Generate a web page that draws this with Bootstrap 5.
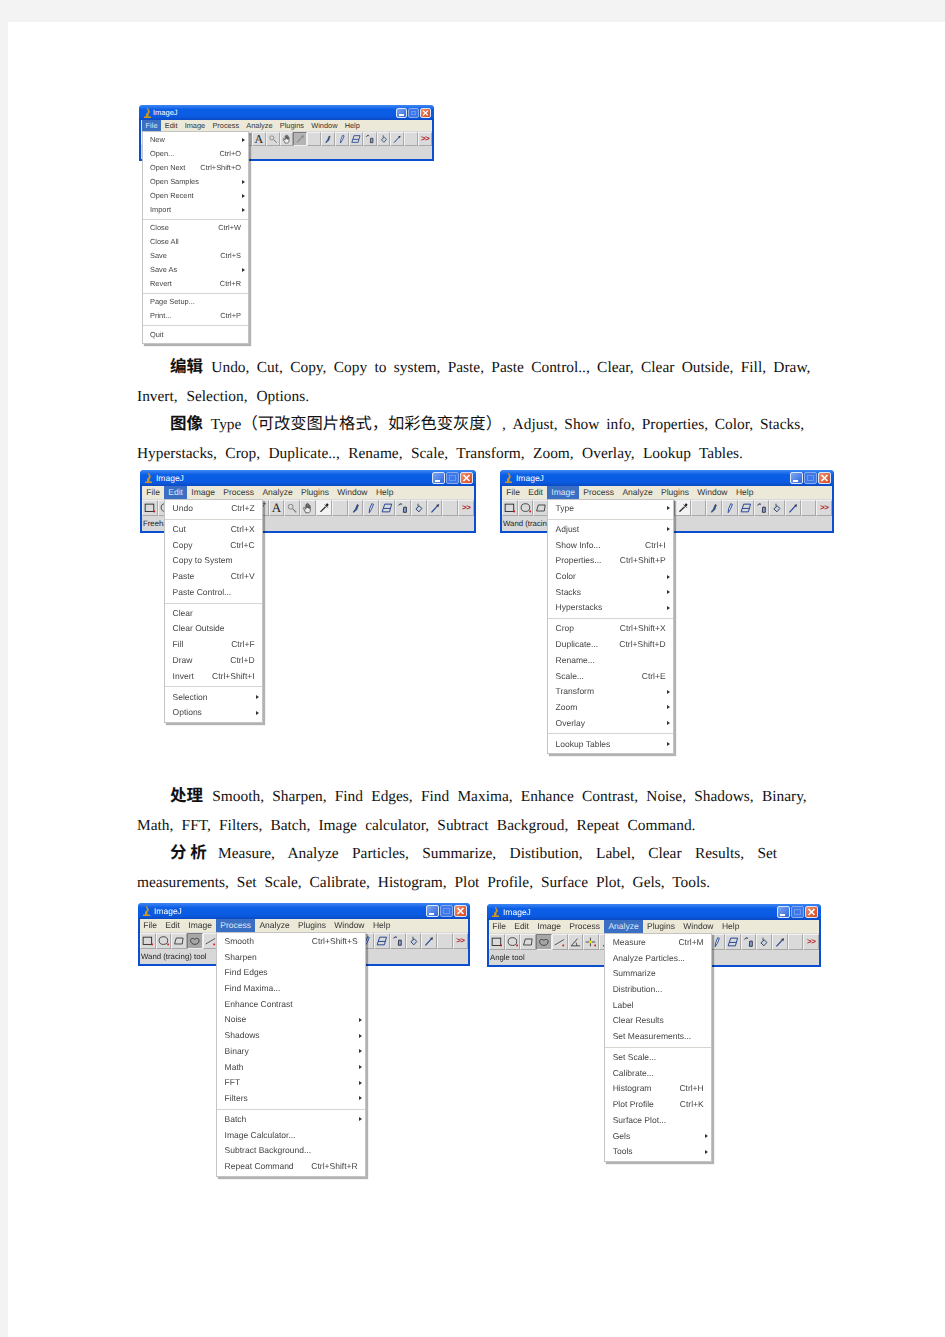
<!DOCTYPE html>
<html lang="zh">
<head>
  <meta charset="UTF-8" />
  <meta name="viewport" content="width=device-width, initial-scale=1.0"/>
  <title>ImageJ 菜单</title>
  <link href="https://cdn.jsdelivr.net/npm/bootstrap@5.3.0/dist/css/bootstrap.min.css" rel="stylesheet" />
  <style>
    body { background: #f3f3f3; margin: 0; }
    .sheet { background: #fff; margin: 22px 0 0 8px; padding: 83px 0 0 129px; height: 1315px; overflow: hidden; }

    /* document text */
    .doc { font: 15.4px/28.7px "Liberation Serif", "Noto Sans CJK SC", serif; color: #111; word-spacing: 4.6px; white-space: nowrap; text-rendering: geometricPrecision; }
    .doc p { margin: 0; height: 28.7px; }
    .doc .ind { padding-left: 33px; }
    .doc b { font-family: "Noto Sans CJK SC", sans-serif; font-size: 16.5px; line-height: 0; font-weight: 700; margin-right: 1px; }
    .doc .cjk { font-family: "Noto Sans CJK SC", sans-serif; font-size: 16.3px; line-height: 0; word-spacing: 0; }
    /* each line of the source document has its own spacing */
    .doc .ws-l1 { word-spacing: 3.5px; }
    .doc .ws-l2 { word-spacing: 5px; }
    .doc .ws-l3 { word-spacing: 3px; }
    .doc .ws-l5, .doc .ws-l6 { word-spacing: 4.4px; }
    .doc .ws-l7 { word-spacing: 9.5px; }
    .doc .ws-l7 b { word-spacing: 0; margin-right: -2px; }
    .doc .ws-l8 { word-spacing: 4.1px; }

    /* rows of screenshots */
    .row-file { height: 249px; }
    .row-edit { height: 313px; margin-top: 1.2px; }
    .row-proc { height: 280px; margin-top: 5.2px; }

    /* ImageJ window */
    .ij-win { position: relative; background: #d8d8d8; border: solid #0a4fd0; border-width: 0 2px 2px; border-radius: 4px 4px 0 0; font-family: "Liberation Sans", sans-serif; color: #333; filter: blur(.4px); text-rendering: geometricPrecision; }
    .win-file { width: 295px; margin-left: 2px; }
    .win-edit { width: 336px; margin-left: 3px; }
    .win-image { width: 334px; margin-left: 24px; }
    .win-proc { width: 332px; margin-left: 1px; }
    .win-ana { width: 334px; margin: 1px 0 0 17px; }

    .ij-title { height: 16px; margin: 0 -2px; padding: 0 3px 0 5px; border-radius: 4px 4px 0 0; background: linear-gradient(#3f86f2, #0a5ee6 30%, #0b5be2 75%, #0a49c4); color: #fff; font-size: 8.5px; }
    .win-file .ij-title { height: 15px; font-size: 7.5px; }
    .win-file .ij-title > svg { margin-right: 2px !important; }
    .ij-wbtn { width: 13px; height: 12px; margin-left: 1px; border: 1px solid #dbe6fb; border-radius: 2px; background: linear-gradient(135deg, #7ea8f3, #2f66dc); position: relative; }
    .win-file .ij-wbtn { width: 11px; height: 10px; }
    .ij-wbtn.is-min::after { content: ""; position: absolute; left: 2px; bottom: 1px; width: 5px; height: 2px; background: #fff; }
    .ij-wbtn.is-max { background: #3f78e8; border-color: #86abf0; }
    .ij-wbtn.is-max::after { content: ""; position: absolute; inset: 2px; border: 1px solid #6c97ea; }
    .ij-wbtn.is-close { background: linear-gradient(135deg, #ee9272, #d9461c); }
    .ij-wbtn svg { display: block; width: 100%; height: 100%; }

    .ij-bar { height: 13px; background: #ece9d8; font-size: 8.5px; line-height: 13px; }
    .win-file .ij-bar { height: 11px; font-size: 7.4px; line-height: 11px; }
    .ij-bar > span, .ij-bar > div { padding: 0 4.2px; }
    .win-file .ij-bar > span, .win-file .ij-bar > div { padding: 0 3.6px; }
    .win-file .ij-bar > :first-child { margin-left: 1px; }
    .win-proc .ij-bar > :first-child, .win-ana .ij-bar > :first-child { margin-left: -1px; }
    .ij-bar .is-open { background: #3a6fc4; color: #dfe8f7; }

    .ij-tools { height: 17px; padding-top: 1px; }
    .win-file .ij-tools { height: 15px; }
    .ij-tool { flex: 1 1 0; min-width: 0; display: flex; align-items: center; justify-content: center; background: #dadada; border: 1px solid; border-color: #f2f2f2 #a8a8a8 #a8a8a8 #f2f2f2; overflow: hidden; font-style: normal; }
    .ij-tool svg { width: 100%; height: 100%; display: block; }
    .ij-tool.is-on { background: #a6a6a6; border-color: #7d7d7d #eee #eee #7d7d7d; }
    .win-file .ij-tool.is-on { background: #b4b4b4; }
    .win-file .ij-tool.is-on svg { opacity: .3; }
    .ij-tool.is-white { background: #f2f2f2; }
    .ij-tool.is-more { color: #b3141a; font-size: 8px; font-weight: 700; letter-spacing: -.5px; }
    .ij-tool.is-letter { font: 13px/1 "Liberation Serif", serif; color: #222; }
    .win-file .ij-tool.is-letter { font-size: 12px; }

    .ij-status { height: 15px; padding-left: 1px; font-size: 7.8px; line-height: 15px; color: #222; white-space: nowrap; overflow: hidden; }
    .win-file .ij-status { height: 13px; }

    /* open menu */
    .ij-menu { --bs-dropdown-min-width: 0; --bs-dropdown-padding-y: 1px; --bs-dropdown-font-size: 8.5px; --bs-dropdown-border-radius: 0; --bs-dropdown-border-color: #c4c4c4; --bs-dropdown-item-padding-x: 7.5px; --bs-dropdown-item-padding-y: 0; --bs-dropdown-divider-margin-y: 2.15px; --bs-dropdown-divider-bg: #d6d6d0; --bs-dropdown-link-color: #444; --bs-dropdown-inner-border-radius: 0; top: 100%; left: 0; margin: 0; box-shadow: 2px 2px 1px rgba(0, 0, 0, .3); z-index: 5; }
    .ij-menu .dropdown-item { line-height: 15.7px; position: relative; }
    .ij-menu .dropdown-divider { opacity: 1; }
    .ij-sub::after { content: ""; position: absolute; right: 3px; top: 5.5px; border: solid transparent; border-width: 2.5px 0 2.5px 3px; border-left-color: #333; }
    .win-file .ij-menu { --bs-dropdown-font-size: 7.4px; --bs-dropdown-item-padding-x: 7px; --bs-dropdown-divider-margin-y: 1.6px; }
    .win-file .ij-menu .dropdown-item { line-height: 14px; }
    .win-file .ij-sub::after { top: 4.5px; }
    .mw-file { width: 107px; }
    .mw-edit { width: 99px; }
    .mw-image { width: 127px; }
    .mw-proc { width: 150px; }
    .mw-ana { width: 108px; }
  </style>
</head>
<body>
  <!-- toolbar icons -->
  <svg width="0" height="0" class="position-absolute">
    <symbol id="t-rect" viewBox="0 0 16 16"><rect x="2.5" y="3.5" width="10" height="8.5" fill="none" stroke="#222"/><rect x="12" y="11" width="2" height="2" fill="#d11"/></symbol>
    <symbol id="t-oval" viewBox="0 0 16 16"><ellipse cx="7.5" cy="7.5" rx="5" ry="4.5" fill="none" stroke="#333"/><rect x="12" y="11" width="2" height="2" fill="#d11"/></symbol>
    <symbol id="t-poly" viewBox="0 0 16 16"><path d="M5 4.500h8l-1 7H3z" fill="none" stroke="#333"/></symbol>
    <symbol id="t-free" viewBox="0 0 16 16"><path d="M3 7.500c0-3 3-3 5-1.500 2-1.500 5-1.500 5 1.500S10 12 8 12 3 10.500 3 7.500z" fill="none" stroke="#333"/></symbol>
    <symbol id="t-line" viewBox="0 0 16 16"><path d="M2 11.500 13 5" stroke="#444" fill="none"/><rect x="11" y="11" width="2" height="2" fill="#d11"/></symbol>
    <symbol id="t-angle" viewBox="0 0 16 16"><path d="M2.500 12.500h10.500M2.500 12.500 10 4M8 8.500c1 1 1 3 1 4" stroke="#333" fill="none"/></symbol>
    <symbol id="t-point" viewBox="0 0 16 16"><path d="M2 8h11M7.500 3v10" stroke="#333"/><rect x="6" y="6.500" width="3" height="3" fill="#ee0"/><rect x="12" y="11" width="2" height="2" fill="#d11"/></symbol>
    <symbol id="t-wand" viewBox="0 0 16 16"><path d="M4 13 11 5" stroke="#333" stroke-width="1.500"/><path d="M12 2v2M10 3h4" stroke="#666"/></symbol>
    <symbol id="t-mag" viewBox="0 0 16 16"><circle cx="6.500" cy="6.500" r="2.800" fill="none" stroke="#777"/><path d="m9 9 4 4" stroke="#777" stroke-width="1.300"/></symbol>
    <symbol id="t-hand" viewBox="0 0 16 16"><path d="M5.500 13.500 3 8.500c-.5-1 .8-1.500 1.400-.6L5.500 9.500V4.500c0-1 1.300-1 1.300 0V8 3.300c0-1 1.400-1 1.400 0V8 4.300c0-1 1.300-1 1.300 0V9 6c0-1 1.300-1 1.300 0v4.500c0 1.500-1 3-2 3z" fill="#eee" stroke="#333" stroke-width=".8"/></symbol>
    <symbol id="t-drop" viewBox="0 0 16 16"><path d="M4 12.500 10 6.500" stroke="#333" stroke-width="1.600"/><path d="m9 4 3.500 3.500M11 3.500c1-1 2.500.5 1.500 1.500l-1 1z" stroke="#111" fill="#111"/></symbol>
    <symbol id="t-brush" viewBox="0 0 16 16"><path d="M5 13c1-3 2-2.500 2.500-4l2-5 1.500.5-2 5.500c-.3 1-2 .5-2.500 2.500z" fill="#2b5fb0" stroke="#223" stroke-width=".6"/></symbol>
    <symbol id="t-pencil" viewBox="0 0 16 16"><path d="M6 13.500 6.500 9l2.500-6 2 .8-2.500 6z" fill="#dfe8f7" stroke="#1c3f90"/></symbol>
    <symbol id="t-erase" viewBox="0 0 16 16"><path d="M5.500 3.500h8l-2.500 9H2.500zM4 8.500h8" fill="none" stroke="#1c3f90" stroke-width="1.100"/></symbol>
    <symbol id="t-tube" viewBox="0 0 16 16"><path d="M3 5c1-2 3-2.500 4-1M9 7h3v6H8.500z" fill="#8aa6d8" stroke="#223"/></symbol>
    <symbol id="t-fill" viewBox="0 0 16 16"><path d="M7 3v3M4.500 9l4-3.500 3 3-3.500 4z" fill="#c7d3e8" stroke="#234"/></symbol>
    <symbol id="t-spray" viewBox="0 0 16 16"><path d="M4 13 11 5.500" stroke="#1c3f90" stroke-width="1.300"/><path d="m9.500 4.500 3.500-1-1 3.500z" fill="#334"/></symbol>
  </svg>

  <main class="sheet">
    <div class="d-flex align-items-start row-file">
      <div class="ij-win win-file" data-menu="file" data-off="11"></div>
    </div>

    <div class="doc">
      <p class="ind ws-l1"><b>编辑</b> Undo, Cut, Copy, Copy to system, Paste, Paste Control.., Clear, Clear Outside, Fill, Draw,</p>
      <p class="ws-l2">Invert, Selection, Options.</p>
      <p class="ind ws-l3"><b>图像</b> Type<span class="cjk">（可改变图片格式，如彩色变灰度）</span>, Adjust, Show info, Properties, Color, Stacks,</p>
      <p>Hyperstacks, Crop, Duplicate.., Rename, Scale, Transform, Zoom, Overlay, Lookup Tables.</p>
    </div>

    <div class="d-flex align-items-start row-edit">
      <div class="ij-win win-edit" data-menu="edit" data-status="Freeha" data-white="11"></div>
      <div class="ij-win win-image" data-menu="image" data-status="Wand (tracing" data-white="11" data-covered="1"></div>
    </div>

    <div class="doc">
      <p class="ind ws-l5"><b>处理</b> Smooth, Sharpen, Find Edges, Find Maxima, Enhance Contrast, Noise, Shadows, Binary,</p>
      <p class="ws-l6">Math, FFT, Filters, Batch, Image calculator, Subtract Backgroud, Repeat Command.</p>
      <p class="ind ws-l7"><b>分 析</b> Measure, Analyze Particles, Summarize, Distibution, Label, Clear Results, Set</p>
      <p class="ws-l8">measurements, Set Scale, Calibrate, Histogram, Plot Profile, Surface Plot, Gels, Tools.</p>
    </div>

    <div class="d-flex align-items-start row-proc">
      <div class="ij-win win-proc" data-menu="proc" data-status="Wand (tracing) tool" data-on="3" data-covered="1"></div>
      <div class="ij-win win-ana" data-menu="ana" data-status="Angle tool" data-on="3" data-covered="1"></div>
    </div>
  </main>

  <script>
    const barNames = ["File", "Edit", "Image", "Process", "Analyze", "Plugins", "Window", "Help"];
    const openItem = { file: "File", edit: "Edit", image: "Image", proc: "Process", ana: "Analyze" };
    const tools = ["rect", "oval", "poly", "free", "line", "angle", "point", "wand", "A", "mag", "hand", "drop", "", "brush", "pencil", "erase", "tube", "fill", "spray", ""];

    // "a|b" has a shortcut, "a>" has a submenu, "-" is a divider
    const menus = {
      file: ["New>", "Open...|Ctrl+O", "Open Next|Ctrl+Shift+O", "Open Samples>", "Open Recent>", "Import>", "-", "Close|Ctrl+W", "Close All", "Save|Ctrl+S", "Save As>", "Revert|Ctrl+R", "-", "Page Setup...", "Print...|Ctrl+P", "-", "Quit"],
      edit: ["Undo|Ctrl+Z", "-", "Cut|Ctrl+X", "Copy|Ctrl+C", "Copy to System", "Paste|Ctrl+V", "Paste Control...", "-", "Clear", "Clear Outside", "Fill|Ctrl+F", "Draw|Ctrl+D", "Invert|Ctrl+Shift+I", "-", "Selection>", "Options>"],
      image: ["Type>", "-", "Adjust>", "Show Info...|Ctrl+I", "Properties...|Ctrl+Shift+P", "Color>", "Stacks>", "Hyperstacks>", "-", "Crop|Ctrl+Shift+X", "Duplicate...|Ctrl+Shift+D", "Rename...", "Scale...|Ctrl+E", "Transform>", "Zoom>", "Overlay>", "-", "Lookup Tables>"],
      proc: ["Smooth|Ctrl+Shift+S", "Sharpen", "Find Edges", "Find Maxima...", "Enhance Contrast", "Noise>", "Shadows>", "Binary>", "Math>", "FFT>", "Filters>", "-", "Batch>", "Image Calculator...", "Subtract Background...", "Repeat Command|Ctrl+Shift+R"],
      ana: ["Measure|Ctrl+M", "Analyze Particles...", "Summarize", "Distribution...", "Label", "Clear Results", "Set Measurements...", "-", "Set Scale...", "Calibrate...", "Histogram|Ctrl+H", "Plot Profile|Ctrl+K", "Surface Plot...", "Gels>", "Tools>"]
    };

    function menuRows(key) {
      return menus[key].map(row => {
        if (row === "-") return `<div class="dropdown-divider"></div>`;
        if (row.endsWith(">")) return `<div class="dropdown-item ij-sub">${row.slice(0, -1)}</div>`;
        const [name, keys] = row.split("|");
        return `<div class="dropdown-item d-flex justify-content-between"><span>${name}</span><span>${keys || ""}</span></div>`;
      }).join("");
    }

    document.querySelectorAll(".ij-win").forEach(win => {
      const key = win.dataset.menu;
      const bar = barNames.map(name => name === openItem[key]
        ? `<div class="dropdown is-open">${name}<div class="dropdown-menu show ij-menu mw-${key}">${menuRows(key)}</div></div>`
        : `<span>${name}</span>`).join("");
      const row = tools.map((t, i) => {
        let cls = "ij-tool";
        if (String(i) === win.dataset.on || String(i) === win.dataset.off) cls += " is-on";
        if (String(i) === win.dataset.white) cls += " is-white";
        // the text tool sits under the open menu in some windows
        if (t === "A") return win.dataset.covered ? `<i class="${cls}"></i>` : `<i class="${cls} is-letter">A</i>`;
        return `<i class="${cls}">${t ? `<svg><use href="#t-${t}"/></svg>` : ""}</i>`;
      }).join("");
      win.innerHTML = `
        <div class="ij-title d-flex align-items-center">
          <svg width="7" height="11" viewBox="0 0 7 11" class="me-1"><path d="M0 11h7v-1.500H4.500V7L6 5 4 1H3l1 4-2 2v2.500H0z" fill="#d0951f"/></svg>
          <span class="flex-grow-1">ImageJ</span>
          <span class="ij-wbtn is-min"></span><span class="ij-wbtn is-max"></span>
          <span class="ij-wbtn is-close"><svg viewBox="0 0 10 10"><path d="m2 2 6 6M8 2 2 8" stroke="#fff" stroke-width="1.600"/></svg></span>
        </div>
        <div class="ij-bar d-flex">${bar}</div>
        <div class="ij-tools d-flex">${row}<i class="ij-tool is-more">&gt;&gt;</i></div>
        <div class="ij-status">${win.dataset.status || ""}</div>`;
    });
  </script>
  <script src="https://cdn.jsdelivr.net/npm/bootstrap@5.3.0/dist/js/bootstrap.bundle.min.js" defer></script>
</body>
</html>
